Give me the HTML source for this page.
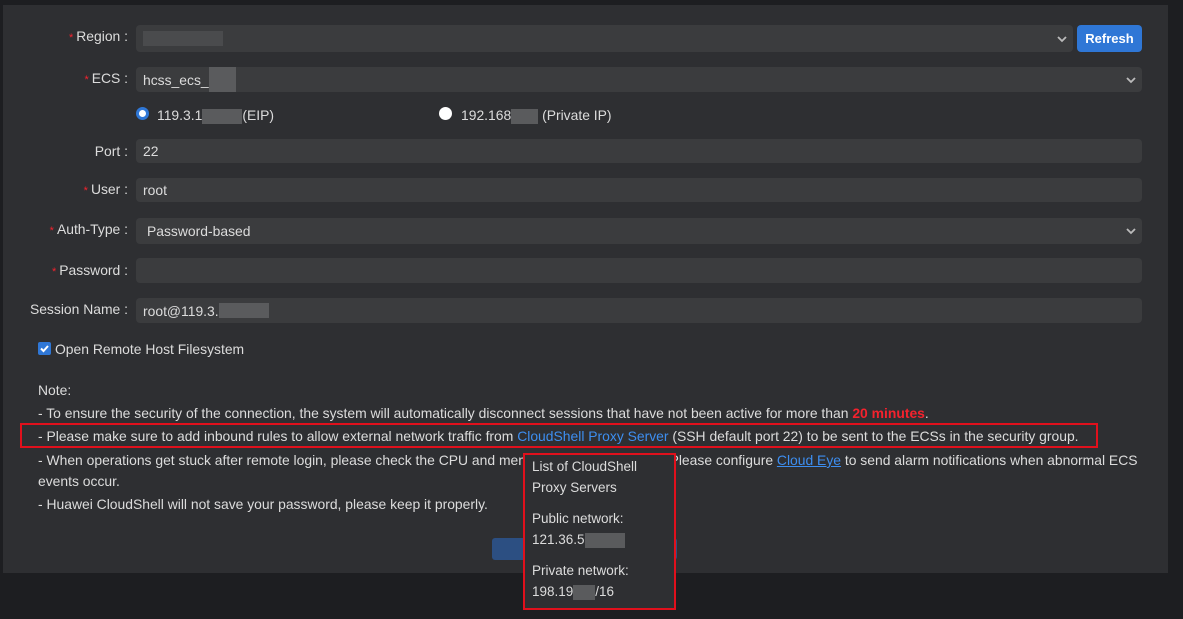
<!DOCTYPE html>
<html><head><meta charset="utf-8"><style>
*{margin:0;padding:0;box-sizing:border-box}
body{width:1183px;height:619px;background:#1d1e21;font-family:"Liberation Sans",sans-serif;color:#dcdcdc;font-size:13.9px;position:relative;overflow:hidden}
.panel{position:absolute;left:3px;top:5px;width:1165px;height:568px;background:#2e2f32}
.a{position:absolute;white-space:nowrap}
.lbl{position:absolute;right:1055px;text-align:right;white-space:nowrap}
.st{color:#f5222d;font-size:11px;margin-right:3px}
.in{position:absolute;left:136px;background:#3b3c3e;border-radius:4px;padding-left:7px;display:flex;align-items:center}
.chev{position:absolute;right:6px;top:50%;margin-top:-4px}
.blur{display:inline-block;background:#5a5b5d;height:15px;vertical-align:middle}
a{color:#3d8ef0;text-decoration:underline}
</style></head><body>
<div class="panel"></div>
<div class="lbl" style="top:28px"><span class="st">*</span>Region :</div>
<div class="in" style="top:25px;width:937px;height:27px"><span class="blur" style="width:80px;background:#4a4b4d"></span><svg class="chev" width="10" height="8" viewBox="0 0 10 8"><path d="M1 2l4 4 4-4" stroke="#bbb" stroke-width="1.8" fill="none"/></svg></div>
<div class="a" style="left:1077px;top:25px;width:65px;height:27px;background:#2f77d6;border-radius:4px;color:#fff;font-weight:bold;text-align:center;line-height:27px;font-size:13px">Refresh</div>
<div class="lbl" style="top:70px"><span class="st">*</span>ECS :</div>
<div class="in" style="top:67px;width:1006px;height:25px">hcss_ecs_<span class="blur" style="width:27px;height:25px"></span><svg class="chev" width="10" height="8" viewBox="0 0 10 8"><path d="M1 2l4 4 4-4" stroke="#bbb" stroke-width="1.8" fill="none"/></svg></div>
<div class="a" style="left:136px;top:107px;width:13px;height:13px;border-radius:50%;background:#fff;border:3px solid #2f77d6"></div>
<div class="a" style="left:157px;top:107px">119.3.1<span class="blur" style="width:40px"></span>(EIP)</div>
<div class="a" style="left:439px;top:107px;width:13px;height:13px;border-radius:50%;background:#fff"></div>
<div class="a" style="left:461px;top:107px">192.168<span class="blur" style="width:27px"></span> (Private IP)</div>
<div class="lbl" style="top:143px">Port :</div>
<div class="in" style="top:139px;width:1006px;height:24px">22</div>
<div class="lbl" style="top:181px"><span class="st">*</span>User :</div>
<div class="in" style="top:178px;width:1006px;height:24px">root</div>
<div class="lbl" style="top:221px"><span class="st">*</span>Auth-Type :</div>
<div class="in" style="top:218px;width:1006px;height:26px;padding-left:11px">Password-based<svg class="chev" width="10" height="8" viewBox="0 0 10 8"><path d="M1 2l4 4 4-4" stroke="#bbb" stroke-width="1.8" fill="none"/></svg></div>
<div class="lbl" style="top:262px"><span class="st">*</span>Password :</div>
<div class="in" style="top:258px;width:1006px;height:25px"></div>
<div class="lbl" style="top:301px">Session Name :</div>
<div class="in" style="top:298px;width:1006px;height:25px">root@119.3.<span class="blur" style="width:50px"></span></div>
<div class="a" style="left:38px;top:342px;width:13px;height:13px;background:#2f77d6;border-radius:2px"><svg width="13" height="13" viewBox="0 0 13 13" style="display:block"><path d="M3 6.5l2.5 2.5 4.5-5" stroke="#fff" stroke-width="2" fill="none"/></svg></div>
<div class="a" style="left:55px;top:341px">Open Remote Host Filesystem</div>
<div class="a" style="left:38px;top:382px">Note:</div>
<div class="a" style="left:38px;top:405px">- To ensure the security of the connection, the system will automatically disconnect sessions that have not been active for more than <b style="color:#f5222d">20 minutes</b>.</div>
<div class="a" style="left:20px;top:423px;width:1078px;height:25px;border:2px solid #e0101c"></div>
<div class="a" style="left:38px;top:428px">- Please make sure to add inbound rules to allow external network traffic from <span style="color:#3d8ef0">CloudShell Proxy Server</span> (SSH default port 22) to be sent to the ECSs in the security group.</div>
<div class="a" style="left:38px;top:452px">- When operations get stuck after remote login, please check the CPU and memory usage of the ECS. Please configure <a>Cloud Eye</a> to send alarm notifications when abnormal ECS</div>
<div class="a" style="left:38px;top:473px">events occur.</div>
<div class="a" style="left:38px;top:496px">- Huawei CloudShell will not save your password, please keep it properly.</div>
<div class="a" style="left:492px;top:538px;width:185px;height:22px;background:#2c4f82;border-radius:3px"></div>
<div class="a" style="left:523px;top:453px;width:153px;height:157px;background:#2e2f32;border:2px solid #e0101c;padding:1px 0 0 7px;line-height:21px;font-size:13.5px;white-space:normal">List of CloudShell<br>Proxy Servers<div style="height:10px"></div>Public network:<br>121.36.5<span class="blur" style="width:40px"></span><div style="height:10px"></div>Private network:<br>198.19<span class="blur" style="width:22px"></span>/16</div>
</body></html>
